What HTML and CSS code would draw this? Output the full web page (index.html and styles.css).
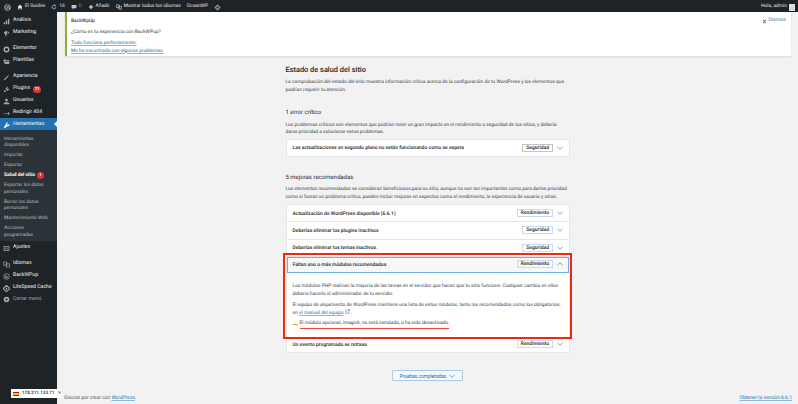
FILE: index.html
```html
<!DOCTYPE html>
<html lang="es">
<head>
    <meta charset="UTF-8">
    <title>Salud del sitio</title>
    <link rel="stylesheet" href="styles.css">
</head>
<body>
    <header class="adminbar">
        <div class="bar-left">
            <svg class="bar-icon wp" viewBox="0 0 20 20"><circle cx="10" cy="10" r="8.5" fill="none" stroke="currentColor" stroke-width="1.6"/><path d="M4.5 7l3.4 9 2.1-6-1.3-3h-1M9 7h5l-1 0 2.6 8 2-5.500" fill="none" stroke="currentColor" stroke-width="1.6"/></svg>
            <span class="bar-item"><svg class="bar-icon" viewBox="0 0 20 20"><path d="M10 2l8 8h-2v8h-4v-5H8v5H4v-8H2z" fill="currentColor"/></svg>El Guides</span>
            <span class="bar-item"><svg class="bar-icon" viewBox="0 0 20 20"><path d="M16 10a6 6 0 1 1-2-4.500M14 2v4h-4" fill="none" stroke="currentColor" stroke-width="2"/></svg>16</span>
            <span class="bar-item muted"><svg class="bar-icon" viewBox="0 0 20 20"><path d="M2 3h16v11H10l-4 4v-4H2z" fill="#c3c4c7"/></svg>0</span>
            <span class="bar-item"><svg class="bar-icon" viewBox="0 0 20 20"><path d="M8 3h4v5h5v4h-5v5H8v-5H3V8h5z" fill="currentColor"/></svg>Añadir</span>
            <span class="bar-item"><svg class="bar-icon" viewBox="0 0 20 20"><path d="M1 3h10v9H1zM9 8h10v9H9z" fill="none" stroke="currentColor" stroke-width="2"/></svg>Mostrar todos los idiomas</span>
            <span class="bar-item">OceanWP</span>
            <svg class="bar-icon diamond" viewBox="0 0 20 20"><path d="M10 1l9 9-9 9-9-9z" fill="#8c8f94"/><circle cx="10" cy="10" r="3" fill="#1d2327"/></svg>
        </div>
        <div class="bar-right">Hola, admin <span class="avatar"></span></div>
    </header>

    <div class="wrap">
        <nav class="sidebar">
            <ul class="menu">
                <li><svg class="menu-icon" viewBox="0 0 20 20"><path d="M2 12h4v6H2zM8 7h4v11H8zM14 2h4v16h-4z" fill="currentColor"/></svg>Análisis</li>
                <li><svg class="menu-icon" viewBox="0 0 20 20"><path d="M3 6l9-4v11L3 9zM14 5a3 3 0 0 1 0 6zM6 10h3l1 8H7z" fill="currentColor"/></svg>Marketing</li>
                <li class="sep"><svg class="menu-icon" viewBox="0 0 20 20"><circle cx="10" cy="10" r="6.500" fill="none" stroke="currentColor" stroke-width="4"/></svg>Elementor</li>
                <li><svg class="menu-icon" viewBox="0 0 20 20"><path d="M2 4h6l2 2h8v2H6l-2 8H2zM7 10h12l-2 7H5z" fill="currentColor"/></svg>Plantillas</li>
                <li class="sep"><svg class="menu-icon" viewBox="0 0 20 20"><path d="M18 2L8 9l3 3zM7 10l3 3-5 5-3-1z" fill="currentColor"/></svg>Apariencia</li>
                <li><svg class="menu-icon" viewBox="0 0 20 20"><path d="M12 2l2 2-2 3 2 2 3-2 1 2-5 5-6-6zM6 11l3 3-5 4-2-2z" fill="currentColor"/></svg>Plugins <span class="count">11</span></li>
                <li><svg class="menu-icon" viewBox="0 0 20 20"><circle cx="10" cy="6" r="4" fill="currentColor"/><path d="M2 18v-3l5-3h6l5 3v3z" fill="currentColor"/></svg>Usuarios</li>
                <li><svg class="menu-icon" viewBox="0 0 20 20"><path d="M2 9h12V5l5 5-5 5v-4H2z" fill="currentColor"/></svg>Redirigir 404</li>
                <li class="current"><svg class="menu-icon" viewBox="0 0 20 20"><path d="M18 5l-4 4-3-3 4-4a5 5 0 0 0-7 6l-6 7 3 3 7-6a5 5 0 0 0 6-7z" fill="currentColor"/></svg>Herramientas</li>
            </ul>
            <ul class="submenu">
                <li>Herramientas disponibles</li>
                <li>Importar</li>
                <li>Exportar</li>
                <li class="active">Salud del sitio <span class="count">1</span></li>
                <li>Exportar los datos personales</li>
                <li>Borrar los datos personales</li>
                <li>Mantenimiento Web</li>
                <li>Acciones programadas</li>
            </ul>
            <ul class="menu lower">
                <li><svg class="menu-icon" viewBox="0 0 20 20"><path d="M2 3h16v14H2zM4 5v10h12V5zM6 7h2v6H6zM11 7h2v6h-2z" fill="currentColor" fill-rule="evenodd"/></svg>Ajustes</li>
                <li class="sep"><svg class="menu-icon" viewBox="0 0 20 20"><path d="M1 3h10v9H1zM9 8h10v9H9z" fill="none" stroke="currentColor" stroke-width="2"/></svg>Idiomas</li>
                <li><svg class="menu-icon" viewBox="0 0 20 20"><circle cx="10" cy="10" r="8" fill="none" stroke="currentColor" stroke-width="2"/><path d="M6 6l3 9 2-6 3 5" fill="none" stroke="currentColor" stroke-width="2"/></svg>BackWPup</li>
                <li><svg class="menu-icon" viewBox="0 0 20 20"><path d="M10 1l9 9-9 9-9-9z" fill="none" stroke="currentColor" stroke-width="3"/><circle cx="10" cy="10" r="2.500" fill="currentColor"/></svg>LiteSpeed Cache</li>
                <li class="collapse"><svg class="menu-icon" viewBox="0 0 20 20"><circle cx="10" cy="10" r="5.500" fill="none" stroke="currentColor" stroke-width="5"/></svg>Cerrar menú</li>
            </ul>
        </nav>

        <div class="main">
            <div class="notice">
                <div class="notice-body">
                    <p class="notice-title">BackWpUp</p>
                    <p class="notice-question">¿Cómo es tu experiencia con BackWPup?</p>
                    <p><a href="#">Todo funciona perfectamente.</a></p>
                    <p><a href="#">Me he encontrado con algunos problemas.</a></p>
                </div>
                <a class="dismiss" href="#"><svg viewBox="0 0 20 20"><path d="M3 3h4l3 4 3-4h4l-5 7 5 7h-4l-3-4-3 4H3l5-7z" fill="#2271b1"/></svg>Dismiss</a>
            </div>

            <div class="health">
                <h2>Estado de salud del sitio</h2>
                <p>La comprobación del estado del sitio muestra información crítica acerca de la configuración de tu WordPress y los elementos que podrían requerir tu atención.</p>

                <h3 class="critical">1 error crítico</h3>
                <p>Los problemas críticos son elementos que podrían tener un gran impacto en el rendimiento o seguridad de tus sitios, y debería darse prioridad a solucionar estos problemas.</p>
                <div class="accordion first">
                    <div class="row"><span class="row-title">Las actualizaciones en segundo plano no están funcionando como se espera</span><span class="tag grey">Seguridad</span><svg class="chev" viewBox="0 0 12 8"><path d="M1 1.500l5 5 5-5" fill="none" stroke="#50575e" stroke-width="1.200"/></svg></div>
                </div>

                <h3 class="recommended">5 mejoras recomendadas</h3>
                <p>Los elementos recomendados se consideran beneficiosos para su sitio, aunque no son tan importantes como para darles prioridad como si fueran un problema crítico, pueden incluir mejoras en aspectos como el rendimiento, la experiencia de usuario y otros.</p>
                <div class="accordion">
                    <div class="row"><span class="row-title">Actualización de WordPress disponible (6.6.1)</span><span class="tag">Rendimiento</span><svg class="chev" viewBox="0 0 12 8"><path d="M1 1.500l5 5 5-5" fill="none" stroke="#50575e" stroke-width="1.200"/></svg></div>
                    <div class="row"><span class="row-title">Deberías eliminar los plugins inactivos</span><span class="tag">Seguridad</span><svg class="chev" viewBox="0 0 12 8"><path d="M1 1.500l5 5 5-5" fill="none" stroke="#50575e" stroke-width="1.200"/></svg></div>
                    <div class="row"><span class="row-title">Deberías eliminar los temas inactivos.</span><span class="tag">Seguridad</span><svg class="chev" viewBox="0 0 12 8"><path d="M1 1.500l5 5 5-5" fill="none" stroke="#50575e" stroke-width="1.200"/></svg></div>
                    <div class="row open"><span class="row-title">Faltan uno o más módulos recomendados</span><span class="tag">Rendimiento</span><svg class="chev" viewBox="0 0 12 8"><path d="M1 6.500l5-5 5 5" fill="none" stroke="#50575e" stroke-width="1.200"/></svg></div>
                    <div class="panel">
                        <p>Los módulos PHP realizan la mayoría de las tareas en el servidor que hacen que tu sitio funcione. Cualquier cambio en ellos debería hacerlo el administrador de tu servidor.</p>
                        <p>El equipo de alojamiento de WordPress mantiene una lista de estos módulos, tanto los recomendados como los obligatorios,<br>en <a href="#">el manual del equipo</a> <svg class="ext" viewBox="0 0 20 20"><path d="M9 4H3v13h13v-6M11 2h7v7M18 2l-8 8" fill="none" stroke="#2271b1" stroke-width="2"/></svg> .</p>
                        <p class="warning"><span class="dash"></span><span class="underlined">El módulo opcional, imagick, no está instalado, o ha sido desactivado.</span></p>
                    </div>
                    <div class="row"><span class="row-title">Un evento programado se retrasa</span><span class="tag">Rendimiento</span><svg class="chev" viewBox="0 0 12 8"><path d="M1 1.500l5 5 5-5" fill="none" stroke="#50575e" stroke-width="1.200"/></svg></div>
                    <div class="highlight"></div>
                </div>

                <div class="actions">
                    <button class="passed">Pruebas completadas <svg class="chev" viewBox="0 0 12 8"><path d="M1 1.500l5 5 5-5" fill="none" stroke="#2271b1" stroke-width="1.200"/></svg></button>
                </div>
            </div>

            <footer class="footer">
                <span class="thanks">Gracias por crear con <a href="#">WordPress</a>.</span>
                <a href="#">Obtener la versión 6.6.1</a>
            </footer>
        </div>
    </div>

    <div class="ip-badge"><span class="flag"></span><b>178.211.133.71</b><span class="ip-close">✕</span></div>
</body>
</html>
```

FILE: styles.css
```css
* {
    box-sizing: border-box;
}

html, body {
    height: 100%;
}

body {
    margin: 0;
    display: flex;
    flex-direction: column;
    overflow: hidden;
    background: #f2f2f2;
    color: #3c434a;
    font-family: Roboto, sans-serif;
    font-size: 4.85px;
    line-height: 7.6px;
    text-rendering: geometricPrecision;
}

p {
    margin: 0;
}

a {
    color: #2271b1;
    text-decoration: underline;
    text-decoration-color: #8db8da;
}

ul {
    list-style: none;
    margin: 0;
    padding: 0;
}

/* top bar */
.adminbar {
    display: flex;
    justify-content: space-between;
    align-items: center;
    flex: none;
    height: 12px;
    padding: 2px 3px 0;
    background: #1d2327;
    color: #e4e6e8;
    font-size: 4.9px;
}

.bar-left {
    display: flex;
    align-items: center;
    gap: 6px;
}

.bar-item {
    display: flex;
    align-items: center;
    gap: 2px;
}

.bar-icon {
    width: 6px;
    height: 6px;
    flex: none;
}

.bar-icon.wp {
    width: 7px;
    height: 7px;
    margin-left: 1px;
}

.bar-icon.diamond {
    width: 7px;
    height: 7px;
}

.muted {
    color: #8c8f94;
}

.bar-right {
    display: flex;
    align-items: center;
    gap: 2px;
}

.avatar {
    width: 6px;
    height: 7px;
    background: #dcdcde;
}

/* sidebar */
.wrap {
    display: flex;
    flex: 1;
    min-height: 0;
}

.sidebar {
    flex: none;
    width: 57px;
    background: #1d2327;
    color: #f0f0f1;
    font-size: 5.2px;
}

.menu {
    padding-top: 2px;
}

.menu li {
    display: flex;
    align-items: center;
    gap: 3px;
    height: 12px;
    padding: 2px 0 0 3px;
}

.menu li.sep {
    margin-top: 4px;
}

.menu-icon {
    width: 7px;
    height: 7px;
    flex: none;
    color: #a7aaad;
}

.menu .current {
    position: relative;
    background: #2271b1;
    color: #fff;
}

.menu .current .menu-icon {
    color: #fff;
}

.menu .current::after {
    content: "";
    position: absolute;
    right: 0;
    top: 3px;
    border: 3px solid transparent;
    border-right-color: #f2f2f2;
}

.menu.lower {
    padding-top: 0;
}

.menu .collapse {
    color: #a7aaad;
    height: 11px;
}

.count {
    display: inline-block;
    min-width: 7px;
    height: 7px;
    padding: 0 1.500px;
    border-radius: 4px;
    background: #d63638;
    color: #fff;
    font-size: 4.200px;
    font-weight: 700;
    line-height: 7px;
    text-align: center;
}

.submenu {
    display: flex;
    flex-direction: column;
    gap: 3.500px;
    padding: 5.500px 6px 3px 4px;
    background: #2c3338;
    color: #b4b9be;
    font-size: 4.900px;
    line-height: 6.500px;
}

.submenu .active {
    display: flex;
    align-items: center;
    gap: 2px;
    height: 6.500px;
    color: #fff;
    font-weight: 700;
}

/* main column */
.main {
    flex: 1;
    min-width: 0;
    display: flex;
    flex-direction: column;
}

.notice {
    display: flex;
    justify-content: space-between;
    flex: none;
    height: 44px;
    margin: 0 7px 0 8px;
    padding: 5px 5px 0 4px;
    background: #fff;
    border-left: 2px solid #8cb33c;
    box-shadow: 0 1px 2px rgba(0, 0, 0, 0.1);
    font-size: 4.900px;
}

.notice-body p {
    line-height: 8px;
}

.notice-title {
    font-weight: 500;
    margin-bottom: 2.500px;
}

.notice-question {
    margin-bottom: 3px;
}

.dismiss {
    display: flex;
    align-items: center;
    gap: 2px;
    height: 8px;
    text-decoration: none;
}

.dismiss svg {
    width: 5px;
    height: 5px;
}

/* site health */
.health {
    align-self: flex-start;
    width: 284px;
    margin-left: 228.500px;
    padding-top: 9px;
}

.health h2 {
    margin: 0 0 5px;
    color: #1d2327;
    font-size: 7.400px;
    font-weight: 500;
    line-height: 9px;
}

.health h3 {
    color: #1d2327;
    font-size: 6px;
    font-weight: 400;
    line-height: 9px;
}

.health h3.critical {
    margin: 14px 0 4.500px;
}

.health h3.recommended {
    margin: 15.700px 0 4.500px;
}

.accordion {
    position: relative;
    margin-top: 3px;
    background: #fff;
    border: 1px solid #e4e5e7;
    border-bottom: 0;
}

.accordion.first {
    margin-top: 2px;
}

.row {
    display: flex;
    align-items: center;
    gap: 4px;
    height: 17.100px;
    padding: 0 5.500px 0 6px;
    border-bottom: 1px solid #e4e5e7;
}

.row.open {
    height: 16.500px;
    background: #f6f7f7;
    outline: 1px solid #72aee6;
    outline-offset: -1px;
}

.row-title {
    flex: 1;
    padding-top: 2px;
    color: #1d2327;
    font-size: 5px;
    font-weight: 500;
}

.tag {
    height: 8px;
    padding: 0 3px;
    border: 1px solid #c5dcf0;
    color: #1d2327;
    font-size: 5px;
    font-weight: 500;
    line-height: 6.500px;
}

.tag.grey {
    border-color: #c3c4c7;
}

.chev {
    width: 6px;
    height: 4px;
    flex: none;
}

.panel {
    display: flex;
    flex-direction: column;
    gap: 3.500px;
    height: 63.200px;
    padding: 10px 6px 0;
}

.ext {
    width: 5px;
    height: 5px;
    vertical-align: -0.500px;
}

.warning {
    display: flex;
    align-items: center;
    gap: 2px;
}

.dash {
    width: 5px;
    height: 1px;
    background: #dba617;
}

.underlined {
    border-bottom: 1px solid #f0443a;
    line-height: 6.500px;
}

/* red annotation box drawn over the open row */
.highlight {
    position: absolute;
    left: -4px;
    right: -3px;
    top: 47.800px;
    height: 86px;
    border: 2px solid #f0280f;
    pointer-events: none;
}

.actions {
    display: flex;
    justify-content: center;
    margin-top: 17px;
}

.passed {
    display: flex;
    align-items: center;
    gap: 3px;
    height: 11px;
    padding: 1px 7px 0;
    background: #f6f7f7;
    border: 1px solid #a9c9e4;
    border-radius: 1px;
    color: #2271b1;
    font-family: inherit;
    font-size: 4.800px;
}

.footer {
    display: flex;
    justify-content: space-between;
    margin-top: auto;
    padding: 0 6px 1.500px 7px;
    color: #50575e;
    font-size: 5px;
}

.thanks {
    font-style: italic;
}

/* geo ip flag, sits over the sidebar corner */
.ip-badge {
    position: absolute;
    left: 11px;
    top: 388.500px;
    display: flex;
    align-items: center;
    gap: 3px;
    width: 51px;
    height: 9px;
    padding: 1px 2px 0;
    background: #fff;
    color: #1d2327;
    font-size: 4.600px;
}

.ip-badge b {
    font-weight: 500;
}

.flag {
    width: 6px;
    height: 4px;
    flex: none;
    background: linear-gradient(#c60b1e 25%, #ffc400 25%, #ffc400 75%, #c60b1e 75%);
}

.ip-close {
    margin-left: auto;
    color: #50575e;
}
```
